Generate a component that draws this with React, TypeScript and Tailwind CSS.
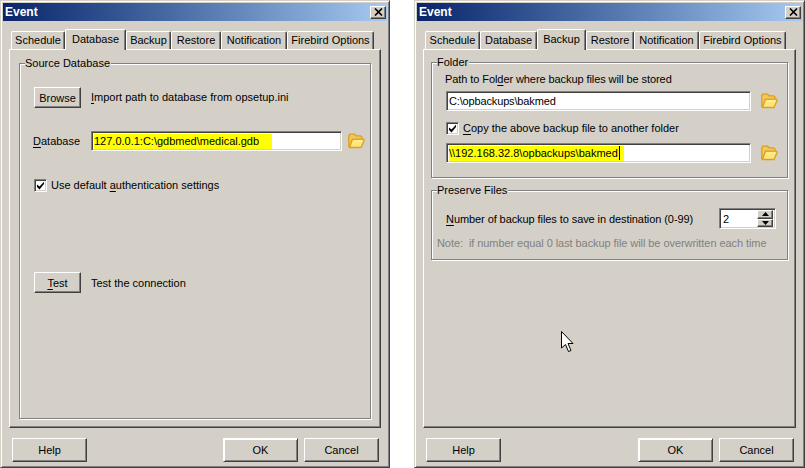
import React from 'react';

const raised = 'border border-t-white border-l-white border-r-[#404040] border-b-[#404040] shadow-[inset_-1px_-1px_0_#808080]';
const sunken = 'border border-t-[#808080] border-l-[#808080] border-r-white border-b-white shadow-[inset_1px_1px_0_#404040,inset_-1px_-1px_0_#d4d0c8]';

const FolderIcon = () => (
  <svg width="17" height="16" viewBox="0 0 17 16" className="shrink-0">
    <path d="M0.8 13.5V2.5L2 1.2H6.5L8 2.8H12.5L14 4V7H5L2.5 13.5Z" fill="#f3c758" stroke="#dd9f1c" strokeWidth="1.3" />
    <path d="M1.5 14.5L4 7.2L5 6.2H15.5L16.2 7.2L13 14.5Z" fill="#fde67f" stroke="#dd9f1c" strokeWidth="1.3" />
    <path d="M5.5 8.2H14" stroke="#fff3b0" strokeWidth="1" />
  </svg>
);

const Checkbox = () => (
  <span className={`flex h-[13px] w-[13px] shrink-0 items-center justify-center bg-white ${sunken}`}>
    <svg width="9" height="9" viewBox="0 0 9 9">
      <path d="M1 3.5V6L3.5 8.5L8 3V0.8L3.5 5.5Z" fill="#000" />
    </svg>
  </span>
);

const Button = ({ className, children }: { className: string; children: React.ReactNode }) => (
  <button className={`flex items-center justify-center bg-[#d4d0c8] text-black ${raised} ${className}`}>{children}</button>
);

const U = ({ children }: { children: React.ReactNode }) => <span className="underline underline-offset-2">{children}</span>;

const TextField = ({ className, children }: { className: string; children: React.ReactNode }) => (
  <div className={`flex h-[20px] items-center bg-white pl-[2px] ${sunken} ${className}`}>{children}</div>
);

const GroupBox = ({ title, className, children }: { title: string; className: string; children: React.ReactNode }) => (
  <div className={`relative border border-[#808080] shadow-[1px_1px_0_#fff,inset_1px_1px_0_#fff] ${className}`}>
    <span className="absolute left-[5px] top-[-8px] bg-[#d4d0c8] pr-[1px] leading-[14px]">{title}</span>
    {children}
  </div>
);

interface TabItem {
  label: string;
  width: string;
  selected?: boolean;
}

const TabStrip = ({ tabs }: { tabs: TabItem[] }) => (
  <div className="flex h-[21px] items-end pl-[2px]">
    {tabs.map((tab) => (
      <div
        key={tab.label}
        className={`flex items-center justify-center rounded-t-[2px] border-t border-l border-r border-t-white border-l-white border-r-[#404040] shadow-[inset_-1px_0_0_#808080] ${tab.width} ${
          tab.selected ? 'relative z-10 mb-[-1px] h-[21px] bg-[#d4d0c8] pb-[3px]' : 'h-[18px] pb-[1px]'
        }`}
      >
        {tab.label}
      </div>
    ))}
  </div>
);

const EventWindow = ({ tabs, className, children }: { tabs: TabItem[]; className: string; children: React.ReactNode }) => (
  <div className={`flex h-[468px] flex-col border border-t-[#d4d0c8] border-l-[#d4d0c8] border-r-[#404040] border-b-[#404040] bg-[#d4d0c8] p-[2px] shadow-[inset_1px_1px_0_#fff,inset_-1px_-1px_0_#808080] ${className}`}>
    <div className="flex h-[18px] items-center justify-between bg-gradient-to-r from-[#0a246a] to-[#a6caf0] pl-[2px] pr-[1px]">
      <span className="text-[12px] font-bold text-white">Event</span>
      <button className={`flex h-[13px] w-[16px] items-center justify-center bg-[#d4d0c8] ${raised}`}>
        <svg width="9" height="8" viewBox="0 0 9 8">
          <path d="M1 0.5L8 7.5M8 0.5L1 7.5" stroke="#000" strokeWidth="1.6" />
        </svg>
      </button>
    </div>
    <div className="flex flex-1 flex-col px-[6px] pt-[7px]">
      <TabStrip tabs={tabs} />
      <div className="h-[379px] border border-t-white border-l-white border-r-[#404040] border-b-[#404040] shadow-[inset_-1px_-1px_0_#808080]">
        {children}
      </div>
      <div className="flex justify-between pl-[3px] pr-[2px] pt-[10px]">
        <Button className="h-[24px] w-[75px]">Help</Button>
        <div className="flex gap-[6px]">
          <Button className="h-[24px] w-[75px] border-black shadow-[inset_1px_1px_0_#fff,inset_-1px_-1px_0_#808080]">OK</Button>
          <Button className="h-[24px] w-[75px]">Cancel</Button>
        </div>
      </div>
    </div>
  </div>
);

const databaseTabs: TabItem[] = [
  { label: 'Schedule', width: 'w-[54px]' },
  { label: 'Database', width: 'w-[61px]', selected: true },
  { label: 'Backup', width: 'w-[45px]' },
  { label: 'Restore', width: 'w-[50px]' },
  { label: 'Notification', width: 'w-[66px]' },
  { label: 'Firebird Options', width: 'w-[87px]' },
];

const backupTabs: TabItem[] = [
  { label: 'Schedule', width: 'w-[55px]' },
  { label: 'Database', width: 'w-[57px]' },
  { label: 'Backup', width: 'w-[49px]', selected: true },
  { label: 'Restore', width: 'w-[48px]' },
  { label: 'Notification', width: 'w-[65px]' },
  { label: 'Firebird Options', width: 'w-[87px]' },
];

const DatabasePage = () => (
  <div className="px-[9px] pb-[8px] pt-[13px]">
    <GroupBox title="Source Database" className="h-[356px] pl-[14px] pt-[23px]">
      <div className="flex items-center gap-[10px]">
        <Button className="h-[21px] w-[47px]">Browse</Button>
        <span className="pb-[2px]"><U>I</U>mport path to database from opsetup.ini</span>
      </div>
      <div className="mt-[23px] flex items-center">
        <span className="ml-[-1px] w-[58px] pb-[1px]"><U>D</U>atabase</span>
        <TextField className="w-[251px]">
          <span className="flex h-[15px] w-[178px] items-center bg-[#ffff00]">127.0.0.1:C:\gdbmed\medical.gdb</span>
        </TextField>
        <span className="ml-[6px]"><FolderIcon /></span>
      </div>
      <div className="mt-[27px] flex items-center gap-[4px]">
        <Checkbox />
        <span>Use default <U>a</U>uthentication settings</span>
      </div>
      <div className="mt-[80px] flex items-center gap-[10px]">
        <Button className="h-[21px] w-[47px]"><span><U>T</U>est</span></Button>
        <span>Test the connection</span>
      </div>
    </GroupBox>
  </div>
);

const BackupPage = () => (
  <div className="px-[7px] pt-[12px]">
    <GroupBox title="Folder" className="h-[116px] pl-[14px] pt-[9px]">
      <div className="ml-[-1px] h-[15px] leading-[15px] tracking-[-0.08px]">Path to Fol<U>d</U>er where backup files will be stored</div>
      <div className="mt-[4px] flex items-center">
        <TextField className="w-[305px] tracking-[-0.15px]">C:\opbackups\bakmed</TextField>
        <span className="ml-[10px]"><FolderIcon /></span>
      </div>
      <div className="mt-[10px] flex items-center gap-[4px]">
        <Checkbox />
        <span><U>C</U>opy the above backup file to another folder</span>
      </div>
      <div className="mt-[8px] flex items-center">
        <TextField className="w-[305px]">
          <span className="flex h-[15px] w-[175px] items-center bg-[#ffff00]">
            \\192.168.32.8\opbackups\bakmed<span className="ml-[1px] h-[14px] w-px bg-black" />
          </span>
        </TextField>
        <span className="ml-[10px]"><FolderIcon /></span>
      </div>
    </GroupBox>
    <GroupBox title="Preserve Files" className="mt-[12px] h-[70px] pl-[14px] pt-[17px]">
      <div className="flex items-center">
        <span className="w-[273px] tracking-[-0.08px]"><U>N</U>umber of backup files to save in destination (0-99)</span>
        <div className={`flex h-[21px] w-[57px] items-center justify-between bg-white p-[2px] pl-[3px] ${sunken}`}>
          <span>2</span>
          <div className="flex h-[17px] w-[16px] flex-col">
            <span className={`flex flex-1 items-center justify-center bg-[#d4d0c8] ${raised}`}>
              <svg width="7" height="4" viewBox="0 0 7 4"><path d="M3.5 0L7 4H0Z" fill="#000" /></svg>
            </span>
            <span className={`flex flex-1 items-center justify-center bg-[#d4d0c8] ${raised}`}>
              <svg width="7" height="4" viewBox="0 0 7 4"><path d="M0 0H7L3.5 4Z" fill="#000" /></svg>
            </span>
          </div>
        </div>
      </div>
      <div className="ml-[-9px] mt-[7px] leading-[15px] tracking-[-0.07px] text-[#808080]">Note:&nbsp; if number equal 0 last backup file will be overwritten each time</div>
    </GroupBox>
  </div>
);

export default function App() {
  return (
    <div className="relative flex h-[468px] w-[805px] gap-[24px] overflow-hidden bg-white font-['Liberation_Sans',Arial,sans-serif] text-[11px] leading-[14px] text-black">
      <EventWindow tabs={databaseTabs} className="w-[390px]">
        <DatabasePage />
      </EventWindow>
      <EventWindow tabs={backupTabs} className="w-[391px]">
        <BackupPage />
      </EventWindow>
      <svg width="13" height="22" viewBox="0 0 13 22" className="absolute left-[561px] top-[331px]">
        <path d="M0.5 0.5V17L4.5 13.5L7.5 20.5L10 19.5L7 12.5H12Z" fill="#fff" stroke="#000" strokeWidth="1" />
      </svg>
    </div>
  );
}
